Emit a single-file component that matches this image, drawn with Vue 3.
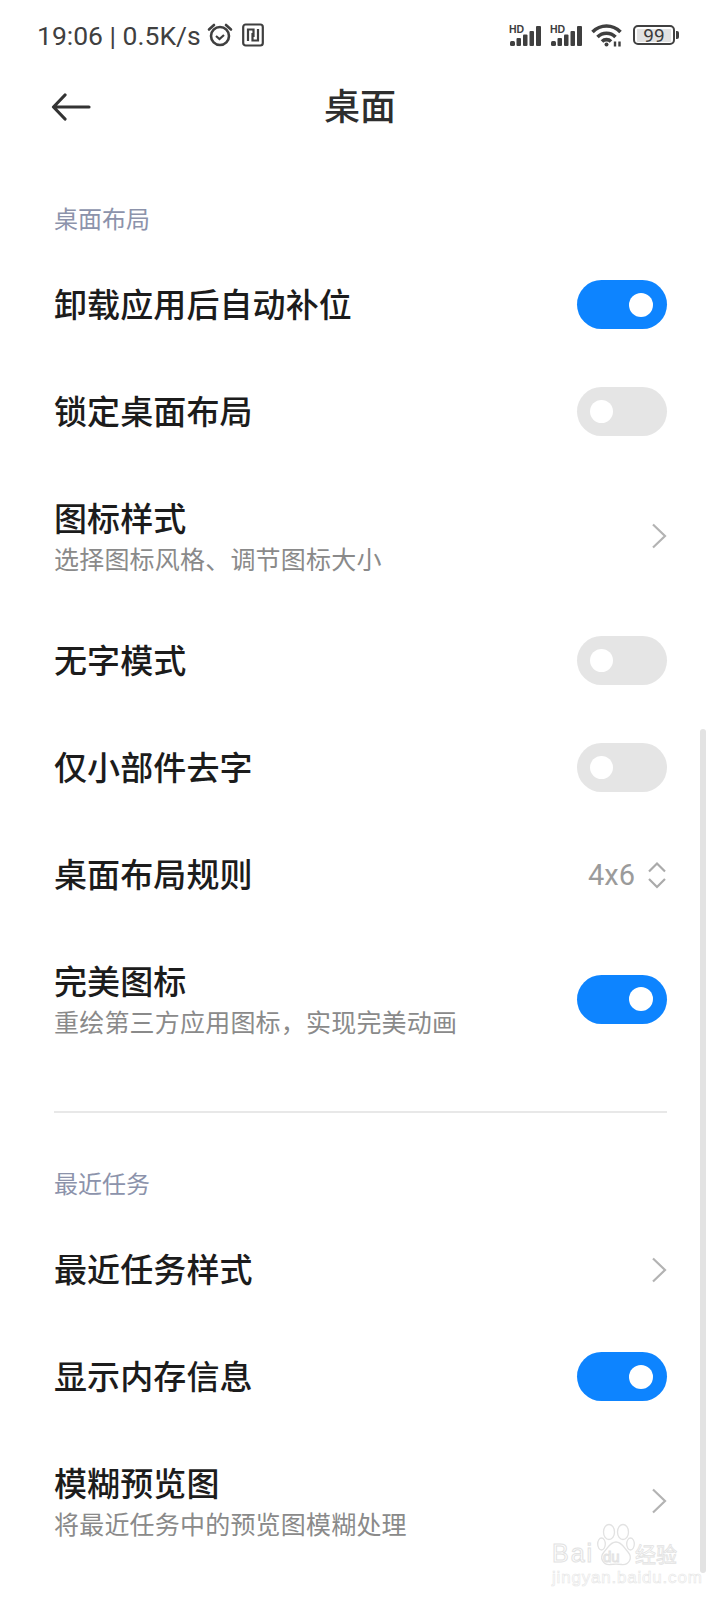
<script setup>
const layoutRows = [
  { title: '卸载应用后自动补位', type: 'switch', on: true },
  { title: '锁定桌面布局', type: 'switch', on: false },
  { title: '图标样式', sub: '选择图标风格、调节图标大小', type: 'arrow' },
  { title: '无字模式', type: 'switch', on: false },
  { title: '仅小部件去字', type: 'switch', on: false },
  { title: '桌面布局规则', type: 'picker', value: '4x6' },
  { title: '完美图标', sub: '重绘第三方应用图标，实现完美动画', type: 'switch', on: true },
];

const recentRows = [
  { title: '最近任务样式', type: 'arrow' },
  { title: '显示内存信息', type: 'switch', on: true },
  { title: '模糊预览图', sub: '将最近任务中的预览图模糊处理', type: 'arrow' },
];

const sections = [
  { name: '桌面布局', rows: layoutRows },
  { name: '最近任务', rows: recentRows },
];

const signals = [0, 1];
</script>

<template>
  <div class="screen">
    <div class="status-bar">
      <div class="status-left">
        <span class="status-text">19:06 | 0.5K/s</span>
        <svg class="alarm" width="26" height="26" viewBox="0 0 26 26" fill="none" stroke="#3f3f3f" stroke-width="2.6">
          <circle cx="13" cy="14" r="9" />
          <path d="M9 14l3.5 3 4.5-4" stroke-width="2.2" />
          <path d="M2 7.5 7 3M24 7.5 19 3" stroke-linecap="round" />
        </svg>
        <svg class="nfc" width="22" height="24" viewBox="0 0 22 24" fill="none" stroke="#3f3f3f" stroke-width="2.2">
          <rect x="1.2" y="1.5" width="19.6" height="21" rx="2.5" />
          <path d="M6 18V6.5h5.5V14M16 6v11.5h-5.500V10" />
        </svg>
      </div>
      <div class="status-right">
        <svg v-for="s in signals" :key="s" class="signal" width="33" height="23" viewBox="0 0 33 23">
          <text x="0" y="9" class="hd">HD</text>
          <rect x="1" y="17" width="5" height="5" rx="1.500" />
          <rect x="7.500" y="14" width="4.500" height="8" rx="1" />
          <rect x="14" y="10.500" width="4.500" height="11.500" rx="1" />
          <rect x="20.500" y="7" width="4.500" height="15" rx="1" />
          <rect x="27" y="2" width="5" height="20" rx="1" />
        </svg>
        <svg class="wifi" width="32" height="24" viewBox="0 0 32 24" fill="none" stroke="#3f3f3f" stroke-width="3.600">
          <path d="M1.500 9C9.500 1 21.500 1 29.500 9" />
          <path d="M6.500 14C11.500 9 19.500 9 24.500 14" />
          <path d="M11 18.500C13.500 16 17.500 16 20 18.500" />
          <circle cx="15.500" cy="21.500" r="2" fill="#3f3f3f" stroke="none" />
          <path d="M24 23.500v-5M28.500 23.500v-5" stroke-width="2.400" />
        </svg>
        <div class="battery">
          <div class="battery-body"><span class="battery-level">99</span></div>
          <div class="battery-cap"></div>
        </div>
      </div>
    </div>

    <div class="header">
      <svg class="back" width="40" height="28" viewBox="0 0 40 28" fill="none" stroke="#333" stroke-width="3.200" stroke-linecap="round" stroke-linejoin="round">
        <path d="M38 14H3M14 2 2.500 14 14 26" />
      </svg>
      <div class="title">桌面</div>
    </div>

    <div class="content">
      <section v-for="(sec, i) in sections" :key="sec.name" class="section">
        <div v-if="i > 0" class="divider"></div>
        <div class="section-name">{{ sec.name }}</div>
        <div v-for="row in sec.rows" :key="row.title" class="row" :class="{ tall: row.sub }">
          <div class="row-text">
            <div class="row-title">{{ row.title }}</div>
            <div v-if="row.sub" class="row-sub">{{ row.sub }}</div>
          </div>
          <div v-if="row.type === 'switch'" class="switch" :class="{ on: row.on }">
            <span class="knob"></span>
          </div>
          <svg v-else-if="row.type === 'arrow'" class="arrow" width="16" height="26" viewBox="0 0 16 26" fill="none" stroke="#b3b3b3" stroke-width="2.200">
            <path d="M2 1.500 14 13 2 24.500" />
          </svg>
          <div v-else class="picker">
            <span class="picker-value">{{ row.value }}</span>
            <svg width="20" height="28" viewBox="0 0 20 28" fill="none" stroke="#aaa" stroke-width="2.200">
              <path d="M2 10.500 10 2.500 18 10.500M2 18 10 26 18 18" />
            </svg>
          </div>
        </div>
      </section>
    </div>

    <div class="scrollbar"></div>

    <div class="watermark">
      <svg class="paw" width="38" height="44" viewBox="0 0 38 44" fill="none" stroke="#e2e2e2" stroke-width="1.300">
        <ellipse cx="12" cy="9" rx="5.500" ry="7.500" />
        <ellipse cx="26" cy="9" rx="5.500" ry="7.500" />
        <ellipse cx="4.500" cy="21" rx="3.800" ry="6" />
        <ellipse cx="33.500" cy="21" rx="3.800" ry="6" />
        <path d="M19 19C13 19 11 25 7 29 2 35 6 42 13 41.500 17 41 21 41 25 41.500 32 42 36 35 31 29 27 25 25 19 19 19Z" />
      </svg>
      <div class="wm-main">
        <span class="wm-bai">Bai</span><span class="wm-du">du</span><span class="wm-cn">经验</span>
      </div>
      <div class="wm-url">jingyan.baidu.com</div>
    </div>
  </div>
</template>

<style>
html,
body {
  margin: 0;
  background: #fff;
}
</style>

<style scoped>
.screen {
  position: relative;
  width: 720px;
  height: 1600px;
  overflow: hidden;
  background: #fff;
  font-family: "Noto Sans CJK SC", "Noto Sans", sans-serif;
  color: #1f1f1f;
}

.status-bar {
  height: 70px;
  padding: 0 41px 0 37px;
  display: flex;
  align-items: center;
  justify-content: space-between;
  box-sizing: border-box;
}

.status-left {
  display: flex;
  align-items: center;
}

.status-text {
  font-family: Roboto, "Open Sans", sans-serif;
  font-size: 26.500px;
  color: #404040;
  white-space: nowrap;
  width: 170px;
}

.nfc {
  margin-left: 9px;
}

.status-right {
  display: flex;
  align-items: center;
  gap: 8px;
}

.signal {
  fill: #3f3f3f;
}

.hd {
  font-family: "Liberation Sans", sans-serif;
  font-size: 10.500px;
  font-weight: 700;
  fill: #3f3f3f;
}

.battery {
  display: flex;
  align-items: center;
  margin-left: 2px;
}

.battery-body {
  width: 38px;
  height: 16px;
  border: 2px solid #404040;
  border-radius: 5px;
  padding: 0;
  display: flex;
  align-items: center;
  justify-content: center;
}

.battery-level {
  width: 34px;
  height: 13px;
  background: #e2e2e2;
  font-family: Roboto, "Open Sans", sans-serif;
  font-size: 19px;
  line-height: 13px;
  color: #3a3a3a;
  text-align: center;
}

.battery-cap {
  width: 3px;
  height: 8px;
  background: #404040;
  margin-left: 1px;
  border-radius: 0 2px 2px 0;
}

.header {
  position: relative;
  height: 74px;
  display: flex;
  align-items: center;
  justify-content: center;
}

.back {
  position: absolute;
  left: 51px;
  top: 23px;
}

.title {
  font-size: 36px;
  line-height: 68px;
  height: 74px;
  color: #2e2e2e;
  font-weight: 500;
}

.content {
  padding: 0 53px 0 54px;
}

.section-name {
  font-size: 24px;
  line-height: 34px;
  color: #8c93ab;
}

.section:first-child .section-name {
  margin-top: 57px;
  margin-bottom: 16px;
}

.section + .section .section-name {
  margin-top: 53px;
  margin-bottom: 16px;
}

.divider {
  height: 2px;
  background: #e8e8e8;
  margin-top: 41px;
}

.row {
  height: 107px;
  display: flex;
  align-items: center;
  justify-content: space-between;
}

.row.tall {
  height: 142px;
}

.row-text {
  padding-bottom: 3px;
}

.row-title {
  font-size: 33px;
  letter-spacing: 0.1px;
  line-height: 46px;
  font-weight: 500;
  color: #1c1c1c;
}

.row-sub {
  font-size: 25px;
  letter-spacing: 0.2px;
  line-height: 36px;
  color: #8a8a8a;
}

.switch {
  width: 90px;
  height: 49px;
  border-radius: 25px;
  background: #e5e5e5;
  position: relative;
  flex-shrink: 0;
}

.switch.on {
  background: #0d84ff;
}

.knob {
  position: absolute;
  left: 13px;
  top: 13px;
  width: 23px;
  height: 23px;
  border-radius: 50%;
  background: #fff;
}

.switch.on .knob {
  left: 52px;
  top: 12.500px;
  width: 24px;
  height: 24px;
}

.picker {
  display: flex;
  align-items: center;
  gap: 12px;
}

.picker-value {
  font-family: Roboto, "Open Sans", sans-serif;
  font-size: 29px;
  color: #9b9b9b;
}

.scrollbar {
  position: absolute;
  left: 700px;
  top: 729px;
  width: 6px;
  height: 844px;
  border-radius: 3px;
  background: #e3e3e3;
}

.watermark {
  position: absolute;
  left: 552px;
  top: 1523px;
  width: 130px;
  height: 62px;
  color: #fff;
  pointer-events: none;
}

.paw {
  position: absolute;
  left: 45px;
  top: 0;
}

.wm-main {
  position: absolute;
  left: 0;
  top: 13px;
  display: flex;
  align-items: center;
  height: 34px;
  white-space: nowrap;
  font-family: "Liberation Sans", sans-serif;
  -webkit-text-stroke: 1px #e2e2e2;
}

.wm-bai {
  font-size: 25px;
  width: 51px;
  letter-spacing: 2px;
}

.wm-du {
  font-size: 15px;
  width: 32px;
  padding-top: 6px;
}

.wm-cn {
  font-family: "Noto Sans CJK SC", sans-serif;
  font-size: 21px;
  -webkit-text-stroke: 0.8px #e2e2e2;
}

.wm-url {
  position: absolute;
  left: 0;
  top: 46px;
  font-family: "Liberation Sans", sans-serif;
  font-size: 17px;
  line-height: 18px;
  white-space: nowrap;
  letter-spacing: 0.8px;
  -webkit-text-stroke: 0.6px #e6e6e6;
}
</style>
